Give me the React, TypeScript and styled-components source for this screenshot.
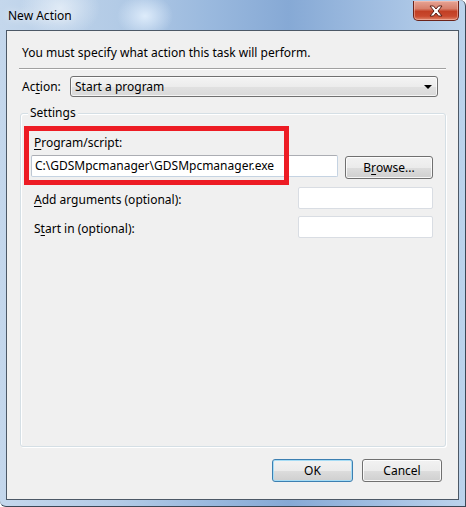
import React from "react";
import styled, { createGlobalStyle, css } from "styled-components";

const GlobalStyle = createGlobalStyle`
  html, body {
    margin: 0;
    padding: 0;
    overflow: hidden;
    background: #ffffff;
  }
  * {
    box-sizing: border-box;
  }
`;

const FONT = `"Noto Sans", "Open Sans", sans-serif`;

const Window = styled.div`
  width: 466px;
  height: 507px;
  display: flex;
  flex-direction: column;
  padding: 0 6px 6px 6px;
  font-family: ${FONT};
  font-size: 12px;
  color: #000;
  border-right: 1px solid #3b4756;
  border-bottom: 1px solid #3b4756;
  border-radius: 0 6px 0 6px;
  background:
    radial-gradient(ellipse 28px 22px at 145px 16px, rgba(230, 242, 255, 0.85), rgba(230, 242, 255, 0) 100%),
    radial-gradient(ellipse 40px 30px at 60px 8px, rgba(240, 246, 252, 0.7), rgba(240, 246, 252, 0) 100%),
    linear-gradient(90deg, #c4d7ec 0%, #b3cbe6 25%, #9ab9de 45%, #86a9d5 62%, #a2bfe2 82%, #bcd3ec 100%);
`;

const TitleBar = styled.div`
  height: 30px;
  display: flex;
  align-items: flex-start;
  justify-content: space-between;
  flex-shrink: 0;
`;

const Title = styled.div`
  padding: 8px 0 0 2px;
  line-height: 16px;
  font-size: 12px;
  color: #000;
  text-shadow: 0 0 8px rgba(255, 255, 255, 0.9);
`;

const CloseButton = styled.div`
  width: 46px;
  height: 20px;
  margin: 1px 0 0 0;
  display: flex;
  align-items: center;
  justify-content: center;
  border: 1px solid #6b231a;
  border-top: none;
  border-radius: 0 0 5px 5px;
  background: linear-gradient(180deg, #e6a495 0%, #d8806c 40%, #c23f24 55%, #c9492e 80%, #e0876c 100%);
  box-shadow: inset 0 0 0 1px rgba(255, 210, 200, 0.45);
`;

const Client = styled.div`
  flex: 1;
  display: flex;
  flex-direction: column;
  background: #f0f0f0;
  border: 1px solid #4c5866;
  position: relative;
`;

const Intro = styled.div`
  margin: 14px 0 0 15px;
  line-height: 16px;
`;

const Separator = styled.div`
  margin: 7px 12px 0 12px;
  border-top: 1px solid #a0a0a0;
  border-bottom: 1px solid #ffffff;
`;

const ActionRow = styled.div`
  margin: 6px 0 0 15px;
  display: flex;
  align-items: center;
  height: 21px;
`;

const Label = styled.span<{ $width?: number }>`
  line-height: 16px;
  white-space: nowrap;
  width: ${({ $width }) => ($width ? `${$width}px` : "auto")};
`;

const U = styled.span`
  text-decoration: underline;
  text-underline-offset: 2px;
`;

const Combo = styled.div`
  width: 368px;
  height: 21px;
  display: flex;
  align-items: center;
  justify-content: space-between;
  padding: 0 5px 0 4px;
  border: 1px solid #707070;
  border-radius: 3px;
  background: linear-gradient(180deg, #f4f4f4 0%, #ececec 50%, #e1e1e1 51%, #d9d9d9 100%);
  box-shadow: inset 0 0 0 1px rgba(255, 255, 255, 0.7);
`;

const Arrow = styled.div`
  width: 0;
  height: 0;
  border-left: 4px solid transparent;
  border-right: 4px solid transparent;
  border-top: 4px solid #000;
`;

const Group = styled.div`
  margin: 16px 12px 0 13px;
  height: 334px;
  border: 1px solid #d5dfe5;
  border-radius: 3px;
  box-shadow: inset 1px 1px 0 #ffffff, 1px 1px 0 #ffffff;
  display: flex;
  flex-direction: column;
  padding: 0 12px 0 10px;
`;

const Legend = styled.div`
  align-self: flex-start;
  margin: -9px 0 0 -3px;
  padding: 0 2px;
  line-height: 16px;
  background: #f0f0f0;
`;

const FieldLabel = styled.div`
  margin: 14px 0 0 3px;
  line-height: 16px;
`;

const Row = styled.div<{ $top: number }>`
  margin-top: ${({ $top }) => $top}px;
  display: flex;
  align-items: flex-start;
  justify-content: space-between;
`;

const RowLabel = styled.div`
  padding: 5px 0 0 3px;
  line-height: 16px;
`;

const TextBox = styled.div<{ $width: number; $disabled?: boolean }>`
  width: ${({ $width }) => $width}px;
  height: 22px;
  background: #ffffff;
  line-height: 20px;
  padding: 0 3px;
  white-space: nowrap;
  overflow: hidden;
  border-radius: 2px;
  ${({ $disabled }) =>
    $disabled
      ? css`
          border: 1px solid #d9dde3;
        `
      : css`
          border: 1px solid #c5d3e2;
          border-top-color: #abadb3;
          border-left-color: #bcc6d2;
        `}
`;

const Button = styled.div<{ $default?: boolean; $width: number }>`
  width: ${({ $width }) => $width}px;
  height: 23px;
  display: flex;
  align-items: center;
  justify-content: center;
  border-radius: 3px;
  line-height: 16px;
  background: linear-gradient(180deg, #f2f2f2 0%, #ebebeb 50%, #dddddd 51%, #cfcfcf 100%);
  ${({ $default }) =>
    $default
      ? css`
          border: 1px solid #3c7fb1;
          box-shadow: inset 0 0 0 1px #a6dcf5;
        `
      : css`
          border: 1px solid #707070;
          box-shadow: inset 0 0 0 1px rgba(255, 255, 255, 0.8);
        `}
`;

const BrowseButton = styled(Button)`
  margin-top: 1px;
`;

const Footer = styled.div`
  margin: 12px 16px 0 0;
  display: flex;
  justify-content: flex-end;
  gap: 9px;
`;

const Highlight = styled.div`
  position: absolute;
  left: 17px;
  top: 95px;
  width: 265px;
  height: 59px;
  border: 5px solid #ed1c24;
`;

const CloseGlyph = () => (
  <svg width="16" height="12" viewBox="0 0 16 12">
    <path
      d="M2 1 H5.5 L8 4 L10.5 1 H14 L10 6 L14 11 H10.5 L8 8 L5.5 11 H2 L6 6 Z"
      fill="#ffffff"
      stroke="#5a2018"
      strokeWidth="1"
      strokeLinejoin="round"
    />
  </svg>
);

export default function App() {
  return (
    <>
      <GlobalStyle />
      <Window>
        <TitleBar>
          <Title>New Action</Title>
          <CloseButton>
            <CloseGlyph />
          </CloseButton>
        </TitleBar>
        <Client>
          <Intro>You must specify what action this task will perform.</Intro>
          <Separator />
          <ActionRow>
            <Label $width={48}>
              Ac<U>t</U>ion:
            </Label>
            <Combo>
              <span>Start a program</span>
              <Arrow />
            </Combo>
          </ActionRow>
          <Group>
            <Legend>Settings</Legend>
            <FieldLabel>
              <U>P</U>rogram/script:
            </FieldLabel>
            <Row $top={4}>
              <TextBox $width={307}>C:\GDSMpcmanager\GDSMpcmanager.exe</TextBox>
              <BrowseButton $width={88}>
                B<U>r</U>owse...
              </BrowseButton>
            </Row>
            <Row $top={8}>
              <RowLabel>
                <U>A</U>dd arguments (optional):
              </RowLabel>
              <TextBox $width={135} $disabled />
            </Row>
            <Row $top={7}>
              <RowLabel>
                S<U>t</U>art in (optional):
              </RowLabel>
              <TextBox $width={135} $disabled />
            </Row>
          </Group>
          <Footer>
            <Button $default $width={81}>
              OK
            </Button>
            <Button $width={80}>Cancel</Button>
          </Footer>
          <Highlight />
        </Client>
      </Window>
    </>
  );
}
